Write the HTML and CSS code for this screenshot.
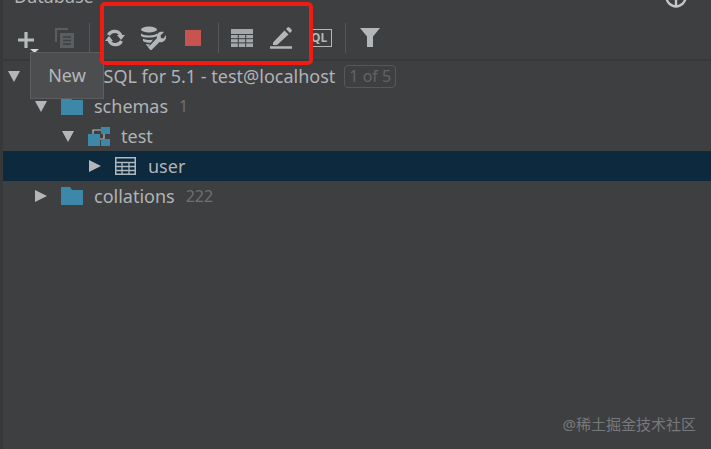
FILE: index.html
```html
<!DOCTYPE html>
<html lang="en">
<head>
    <meta charset="UTF-8">
    <title>Database</title>
    <link rel="stylesheet" href="styles.css">
</head>
<body>
    <div class="panel">
        <div class="title-bar">
            <span class="title">Database</span>
            <svg class="globe" width="24" height="24" viewBox="0 0 24 24"><circle cx="12" cy="12" r="9.5" fill="none" stroke="#c4c6c7" stroke-width="2.4"/><path d="M12 3v18M7 11h10" stroke="#c4c6c7" stroke-width="2.4"/></svg>
        </div>

        <div class="toolbar">
            <svg class="tool tool-add" width="26" height="30" viewBox="0 0 26 30"><path d="M9 7v16M1 15h16" stroke="#b8bbbc" stroke-width="3.2"/><path d="M13 24h9l-4.500 4z" fill="#d6d8d9"/></svg>
            <svg class="tool tool-copy" width="22" height="22" viewBox="0 0 22 22"><path d="M2 15V2h12" fill="none" stroke="#5b5e60" stroke-width="2"/><rect x="6" y="6" width="14" height="15" fill="#5b5e60"/><path d="M9 10h8M9 13.500h8M9 17h8" stroke="#3d3f41" stroke-width="1.500"/></svg>
            <div class="divider divider-first"></div>
            <svg class="tool tool-refresh" width="20" height="20" viewBox="0 0 20 20"><path d="M16 8A6.800 6.800 0 0 0 3.500 7M4 12a6.800 6.800 0 0 0 12.500 1" fill="none" stroke="#b4b7b9" stroke-width="3.300"/><path d="M20 7h-8l4 5zM0 13h8L4 8z" fill="#b4b7b9"/></svg>
            <svg class="tool tool-config" width="26" height="24" viewBox="0 0 26 24"><ellipse cx="9" cy="3.500" rx="8" ry="3" fill="#b4b7b9"/><path d="M1 7.500c2 2.500 14 2.500 16 0V10c-3 2-13 2-16 0zM3 12.500c2 1.500 7 2 10 1l-2 3c-3 .5-6 0-8-1.500zM6 18l4 .5L8.500 21c-1-.5-2-1.500-2.500-3z" fill="#b4b7b9"/><path d="M8 21.500L17 12c-1-4 2-7 7-6l-3.500 3.500.5 2.500 2.500.5L26 9c1 5-3 8-6.500 7L11 24.500z" fill="#b4b7b9"/></svg>
            <div class="tool stop"></div>
            <div class="divider divider-second"></div>
            <svg class="tool tool-table" width="22" height="18" viewBox="0 0 22 18"><rect width="22" height="18" fill="#a4a8aa"/><path d="M0 5.500h22M0 9.700h22M0 13.900h22M7.300 5v13M14.700 5v13" stroke="#3d3f41" stroke-width="1"/></svg>
            <svg class="tool tool-edit" width="22" height="22" viewBox="0 0 22 22"><path d="M3 15.500L14.500 3.500l4 4L7 18H3zM16 2l1.500-1.500c.8-.5 1.500-.5 2 0l2 2c.5.7.5 1.300 0 2L20 6z" fill="#b4b7b9"/><path d="M0 20.500h22" stroke="#b4b7b9" stroke-width="2.500"/></svg>
            <div class="tool ql">QL</div>
            <div class="divider divider-third"></div>
            <svg class="tool tool-filter" width="20" height="19" viewBox="0 0 20 19"><path d="M0 0h20l-7 8.500V19H7V8.500z" fill="#b4b7b9"/></svg>
        </div>

        <ul class="tree">
            <li class="row">
                <span class="arrow arrow-down"></span>
                <span class="icon-gap"></span>
                <span class="label host">MySQL for 5.1 - test@localhost</span>
                <span class="badge">1 of 5</span>
            </li>
            <li class="row level-1">
                <span class="arrow arrow-down"></span>
                <svg class="icon" width="22" height="18" viewBox="0 0 22 18"><path d="M0 0h9l2 3h11v15H0z" fill="#3d87a8"/></svg>
                <span class="label">schemas</span>
                <span class="count">1</span>
            </li>
            <li class="row level-2">
                <span class="arrow arrow-down"></span>
                <svg class="icon" width="22" height="20" viewBox="0 0 22 20"><path d="M5 12V4h8M16 8v5h-6" fill="none" stroke="#b9bcbe" stroke-width="1.200"/><rect y="8" width="12" height="12" fill="#3d87a8"/><rect x="13" y="1" width="9" height="7" fill="#3d87a8"/><rect x="13" y="13" width="9" height="7" fill="#3d87a8"/></svg>
                <span class="label">test</span>
            </li>
            <li class="row level-3 selected">
                <span class="arrow arrow-right"></span>
                <svg class="icon" width="21" height="18" viewBox="0 0 21 18"><rect x=".75" y=".75" width="19.500" height="16.500" fill="none" stroke="#aeb9c0" stroke-width="1.500"/><path d="M0 5.500h21M0 9.500h21M0 13.500h21M7 5v13M14 5v13" stroke="#aeb9c0" stroke-width="1.300"/></svg>
                <span class="label">user</span>
            </li>
            <li class="row level-1">
                <span class="arrow arrow-right"></span>
                <svg class="icon" width="22" height="18" viewBox="0 0 22 18"><path d="M0 0h9l2 3h11v15H0z" fill="#3d87a8"/></svg>
                <span class="label">collations</span>
                <span class="count">222</span>
            </li>
        </ul>

        <div class="tooltip">New</div>
        <div class="highlight"></div>
        <div class="watermark">@稀土掘金技术社区</div>
    </div>
</body>
</html>
```

FILE: styles.css
```css
html, body {
    margin: 0;
    padding: 0;
}
body {
    font-family: "Noto Sans", "Noto Sans CJK SC", sans-serif;
    background-color: #3e3f41;
    color: #b0b3b5;
}
.panel {
    position: relative;
    width: 711px;
    height: 449px;
    overflow: hidden;
    border-left: 3px solid #37383a;
    box-sizing: border-box;
}
.title-bar {
    display: flex;
    justify-content: space-between;
    height: 8px;
    padding: 0 23px 0 11px;
    overflow: hidden;
}
.title {
    margin-top: -15px;
    font-size: 18px;
    line-height: 23px;
}
.globe {
    margin-top: -15px;
}
.toolbar {
    display: flex;
    align-items: center;
    height: 43px;
    padding-top: 8px;
    border-bottom: 2px solid #37383a;
}
.tool {
    flex: none;
}
.tool-add {
    margin: 4px 0 0 14px;
}
.tool-copy {
    margin-left: 11px;
}
.divider {
    flex: none;
    width: 1px;
    height: 30px;
    background-color: #55585a;
}
.divider-first {
    margin-left: 13px;
}
.tool-refresh {
    margin-left: 15px;
}
.tool-config {
    margin-left: 15px;
}
.stop {
    width: 16px;
    height: 16px;
    margin-left: 19px;
    background-color: #c75450;
}
.divider-second {
    margin-left: 17px;
}
.tool-table {
    margin-left: 12px;
}
.tool-edit {
    margin-left: 17px;
}
.ql {
    width: 21px;
    height: 18px;
    margin-left: 19px;
    border: 1.500px solid #b4b7b9;
    border-left: 0;
    box-sizing: border-box;
    font-size: 12px;
    font-weight: 700;
    line-height: 15px;
    color: #b4b7b9;
}
.divider-third {
    margin-left: 13px;
}
.tool-filter {
    margin-left: 14px;
}
.tree {
    margin: 0;
    padding: 0;
    list-style: none;
}
.row {
    display: flex;
    align-items: center;
    height: 30px;
    padding-left: 5px;
    font-size: 18px;
    white-space: nowrap;
}
.level-1 {
    padding-left: 32px;
}
.level-2 {
    padding-left: 59px;
}
.level-3 {
    padding-left: 86px;
}
.selected {
    background-color: #0d293e;
}
.arrow {
    flex: none;
    width: 12px;
    height: 12px;
    margin-right: 14px;
    background-color: #b4b7b9;
}
.arrow-down {
    clip-path: polygon(0 8%, 100% 8%, 50% 100%);
}
.arrow-right {
    clip-path: polygon(0 0, 100% 50%, 0 100%);
}
.icon {
    flex: none;
    margin-right: 11px;
}
.level-3 .icon {
    margin-right: 12px;
}
.icon-gap {
    flex: none;
    width: 2px;
}
.host {
    margin-left: 42px;
}
.count {
    margin-left: 11px;
    font-size: 16px;
    color: #6d7072;
}
.badge {
    margin-left: 9px;
    padding: 0 4px;
    border: 1px solid #55585a;
    border-radius: 4px;
    font-size: 16px;
    line-height: 21px;
    color: #616466;
}
.tooltip {
    position: absolute;
    left: 27px;
    top: 52px;
    width: 74px;
    height: 47px;
    border: 1px solid #5b5d5f;
    box-sizing: border-box;
    background-color: #4b4d4e;
    font-size: 18px;
    line-height: 45px;
    text-align: center;
    color: #b4b7b9;
}
.highlight {
    position: absolute;
    left: 97px;
    top: 2px;
    width: 213px;
    height: 63px;
    border: 4px solid #f01c14;
    border-radius: 5px;
    box-sizing: border-box;
}
.watermark {
    position: absolute;
    right: 15px;
    bottom: 15px;
    font-size: 15px;
    line-height: 20px;
    color: #77797b;
}
```
